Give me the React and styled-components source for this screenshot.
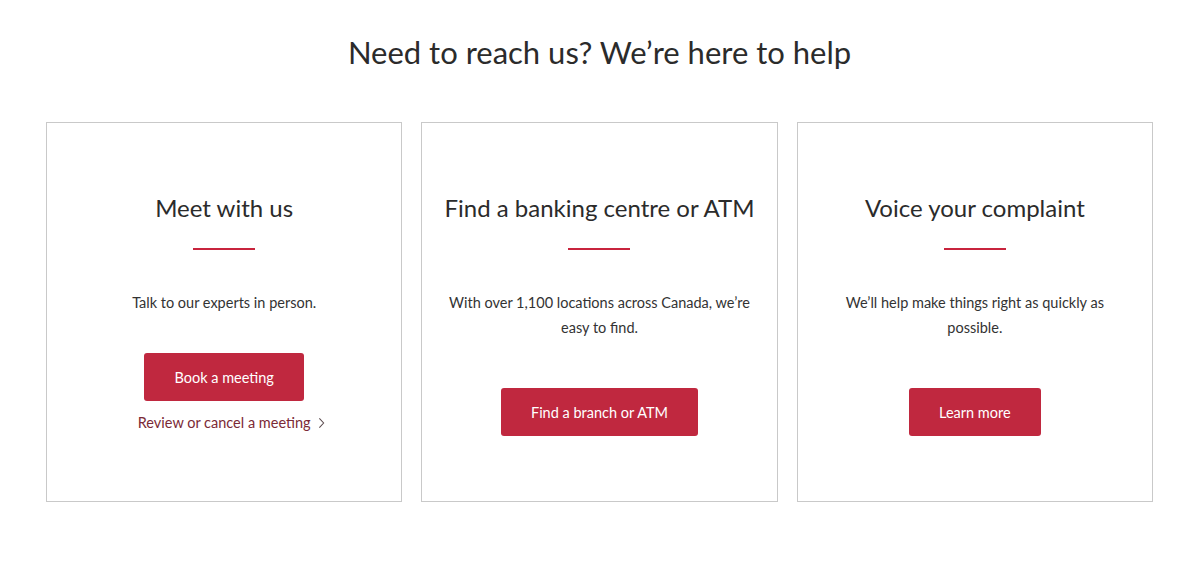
import React from 'react'
import styled, { createGlobalStyle } from 'styled-components'

const GlobalStyle = createGlobalStyle`
  body {
    margin: 0;
    background: #ffffff;
    font-family: Lato, "Open Sans", sans-serif;
    color: #2d2d2d;
  }
`;

const cards = [
  {
    title: 'Meet with us',
    text: 'Talk to our experts in person.',
    button: 'Book a meeting',
    link: 'Review or cancel a meeting',
  },
  {
    title: 'Find a banking centre or ATM',
    text: 'With over 1,100 locations across Canada, we\u2019re easy to find.',
    button: 'Find a branch or ATM',
  },
  {
    title: 'Voice your complaint',
    text: 'We\u2019ll help make things right as quickly as possible.',
    button: 'Learn more',
  },
];

function Chevron() {
  return (
    <ChevronIcon viewBox="0 0 8 14" aria-hidden="true">
      <path d="M1.5 1.5 L6.5 7 L1.5 12.5" fill="none" stroke="currentColor" strokeWidth="1.2" />
    </ChevronIcon>
  );
}

function App() {
  return (
    <>
      <GlobalStyle />
      <Section>
        <Heading>Need to reach us? We&rsquo;re here to help</Heading>
        <CardGrid>
          {cards.map((card) => (
            <Card key={card.title}>
              <CardTitle>{card.title}</CardTitle>
              <Rule />
              <CardText>{card.text}</CardText>
              <Button $tight={!!card.link}>{card.button}</Button>
              {card.link && (
                <TextLink href="#">
                  {card.link}
                  <Chevron />
                </TextLink>
              )}
            </Card>
          ))}
        </CardGrid>
      </Section>
    </>
  );
}

const Section = styled.section`
  padding: 30px 47px 66px 46px;
  display: flex;
  flex-direction: column;
  align-items: center;
`;

const Heading = styled.h2`
  margin: 0 0 48px;
  font-size: 31px;
  font-weight: 400;
  line-height: 44px;
  color: #2b2b2b;
`;

const CardGrid = styled.div`
  width: 100%;
  display: grid;
  grid-template-columns: repeat(3, 1fr);
  gap: 19px;
`;

const Card = styled.div`
  border: 1px solid #c9c9c9;
  height: 380px;
  box-sizing: border-box;
  padding: 69px 16px 0;
  display: flex;
  flex-direction: column;
  align-items: center;
  text-align: center;
`;

const CardTitle = styled.h3`
  margin: 0;
  font-size: 24px;
  font-weight: 400;
  line-height: 32px;
  color: #2b2b2b;
  white-space: nowrap;
`;

const Rule = styled.span`
  display: block;
  width: 62px;
  height: 2px;
  background: #c8243d;
  margin-top: 24px;
`;

const CardText = styled.p`
  margin: 40px 0 0;
  font-size: 14.5px;
  line-height: 25px;
  color: #333333;
  max-width: 310px;
`;

const Button = styled.button`
  margin-top: ${(p) => (p.$tight ? '38px' : '48px')};
  border: none;
  border-radius: 3px;
  background: #c0283f;
  color: #ffffff;
  font-family: Lato, "Open Sans", sans-serif;
  font-size: 14.5px;
  height: 48px;
  padding: 0 30px;
  cursor: pointer;
`;

/* text stays centred; the chevron hangs off its right edge */
const TextLink = styled.a`
  position: relative;
  margin-top: 11px;
  font-size: 14.5px;
  line-height: 22px;
  color: #7b2a36;
  text-decoration: none;
`;

const ChevronIcon = styled.svg`
  position: absolute;
  left: calc(100% + 7px);
  top: 5px;
  width: 7px;
  height: 12px;
  color: #5a4a4d;
`;

export default App
